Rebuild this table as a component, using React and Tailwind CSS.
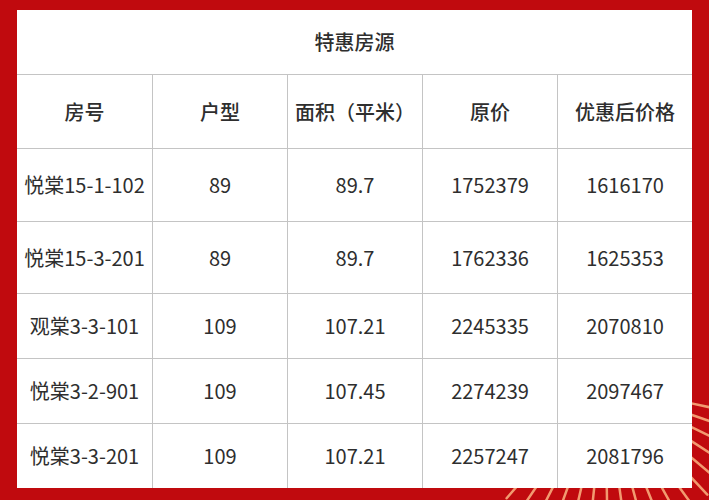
import React from "react";

const rows = [
  ["悦棠15-1-102", "89", "89.7", "1752379", "1616170", "h-[73px]"],
  ["悦棠15-3-201", "89", "89.7", "1762336", "1625353", "h-[72px]"],
  ["观棠3-3-101", "109", "107.21", "2245335", "2070810", "h-[65px]"],
  ["悦棠3-2-901", "109", "107.45", "2274239", "2097467", "h-[65px]"],
  ["悦棠3-3-201", "109", "107.21", "2257247", "2081796", "h-[65px]"],
];

const headers = ["房号", "户型", "面积（平米）", "原价", "优惠后价格"];

function Rays() {
  const cx = 605;
  const cy = 385;
  const lines = [];
  for (let a = 12; a <= 140; a += 7) {
    const r = (a * Math.PI) / 180;
    const c = Math.cos(r);
    const s = Math.sin(r);
    lines.push(
      <line
        key={a}
        x1={cx + c * 86}
        y1={cy + s * 86}
        x2={cx + c * 150}
        y2={cy + s * 150}
        stroke="#f29a70"
        strokeWidth="2.5"
        strokeLinecap="round"
      />
    );
  }
  return (
    <svg className="absolute left-0 top-0" width="709" height="500" viewBox="0 0 709 500">
      {lines}
    </svg>
  );
}

export default function App() {
  return (
    <div
      className="relative w-[709px] h-[500px] bg-[#c00a0e] overflow-hidden pl-[17px] pr-[17px] pt-[10px]"
      style={{ fontFamily: '"Noto Sans CJK SC", "Noto Sans", sans-serif' }}
    >
      <Rays />
      <div className="relative bg-white w-[675px] text-[#2e2e2e] text-[20px]">
        <div className="h-[64px] flex items-center justify-center font-medium">特惠房源</div>
        <div className="h-[74px] grid grid-cols-5 border-t border-[#c4c4c4]">
          {headers.map((h, i) => (
            <div
              key={h}
              className={`flex items-center justify-center font-medium ${i > 0 ? "border-l border-[#c4c4c4]" : ""}`}
            >
              {h}
            </div>
          ))}
        </div>
        {rows.map((r) => (
          <div key={r[0]} className={`${r[5]} grid grid-cols-5 border-t border-[#c4c4c4]`}>
            {r.slice(0, 5).map((c, i) => (
              <div
                key={i}
                className={`flex items-center justify-center ${i > 0 ? "border-l border-[#c4c4c4]" : ""}`}
              >
                {c}
              </div>
            ))}
          </div>
        ))}
      </div>
    </div>
  );
}
